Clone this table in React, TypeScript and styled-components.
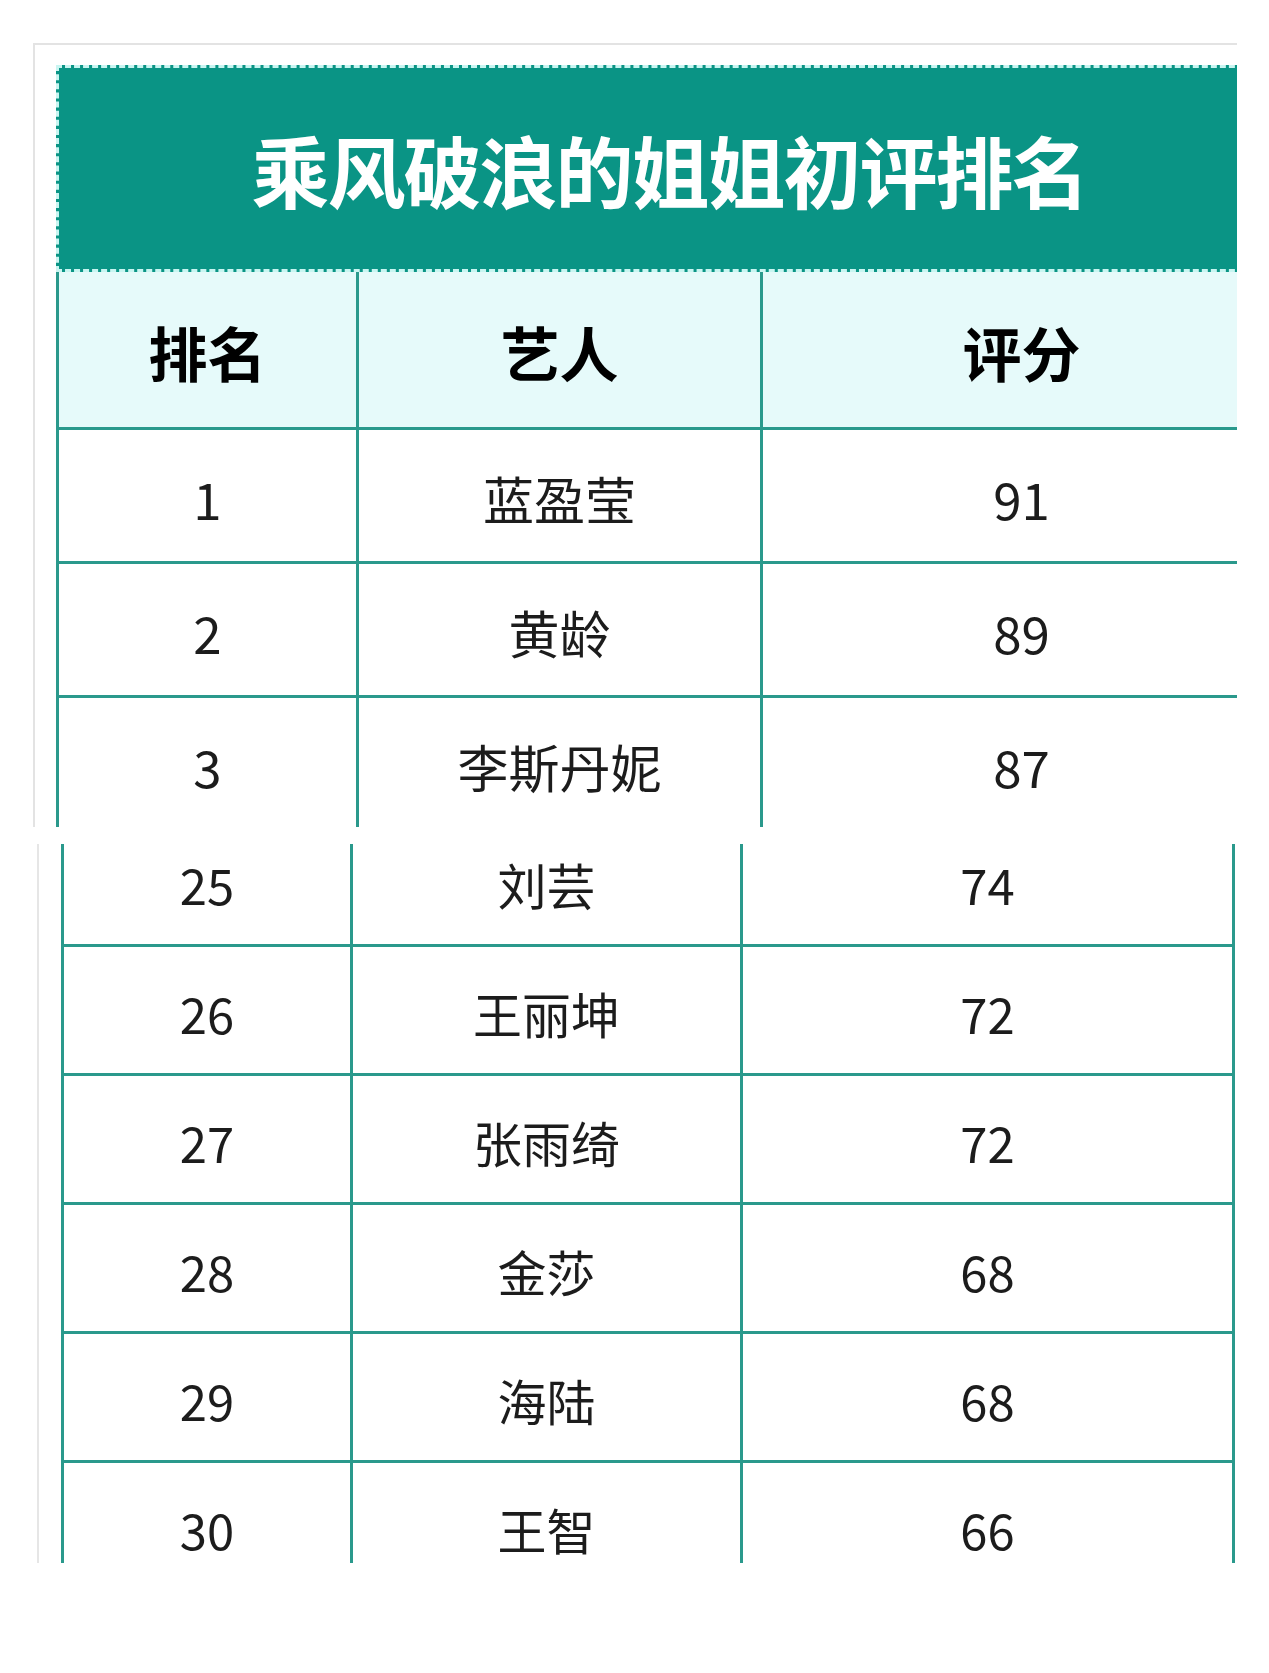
import React from "react";
import styled, { createGlobalStyle } from "styled-components";

type Row = {
  rank: number;
  name: string;
  score: number;
};

const topRows: Row[] = [
  { rank: 1, name: "蓝盈莹", score: 91 },
  { rank: 2, name: "黄龄", score: 89 },
  { rank: 3, name: "李斯丹妮", score: 87 },
];

const bottomRows: Row[] = [
  { rank: 25, name: "刘芸", score: 74 },
  { rank: 26, name: "王丽坤", score: 72 },
  { rank: 27, name: "张雨绮", score: 72 },
  { rank: 28, name: "金莎", score: 68 },
  { rank: 29, name: "海陆", score: 68 },
  { rank: 30, name: "王智", score: 66 },
];

const GlobalStyle = createGlobalStyle`
  html, body {
    margin: 0;
    padding: 0;
    background: #ffffff;
  }
  body {
    font-family: "Noto Sans CJK SC", "Noto Sans", sans-serif;
    color: #1a1a1a;
  }
  * {
    box-sizing: border-box;
  }
`;

const Page = styled.div`
  width: 1269px;
  height: 1673px;
  overflow: hidden;
  padding-top: 43px;
`;

const TopFrame = styled.section`
  width: 1204px;
  height: 784px;
  margin-left: 33px;
  border-top: 2px solid #e3e3e3;
  border-left: 2px solid #e3e3e3;
  padding: 20px 0 0 21px;
  overflow: hidden;
`;

const BottomFrame = styled.section`
  width: 1200px;
  height: 719px;
  margin: 17px 0 0 37px;
  border-left: 2px solid #e6e6e6;
  padding-left: 22px;
  overflow: hidden;
`;

const TitleBar = styled.div`
  width: 1224px;
  height: 207px;
  background: #0a9485;
  border: 3px dashed #c9f5f1;
  border-right: none;
  display: flex;
  align-items: center;
  justify-content: center;
  color: #ffffff;
  font-size: 78px;
  font-weight: 700;
  letter-spacing: -2px;
`;

type GridProps = {
  $cols: string;
  $width: number;
  $shift?: number;
  $closed?: boolean;
};

const Grid = styled.div<GridProps>`
  width: ${({ $width }) => $width}px;
  display: grid;
  grid-template-columns: ${({ $cols }) => $cols};
  border-left: 3px solid #2a998c;
  margin-top: ${({ $shift }) => ($shift ? -$shift : 0)}px;
  ${({ $closed }) => ($closed ? "border-right: 3px solid #2a998c;" : "")}
`;

type CellProps = {
  $height: number;
  $head?: boolean;
  $last?: boolean;
  $size: number;
};

const Cell = styled.div<CellProps>`
  height: ${({ $height }) => $height}px;
  display: flex;
  align-items: center;
  justify-content: center;
  border-bottom: 3px solid #2a998c;
  border-right: ${({ $last }) => ($last ? "none" : "3px solid #2a998c")};
  background: ${({ $head }) => ($head ? "#e6fafa" : "#ffffff")};
  font-size: ${({ $size }) => $size}px;
  font-weight: ${({ $head }) => ($head ? 700 : 400)};
  color: ${({ $head }) => ($head ? "#000000" : "#1c1c1c")};
  padding-top: 4px;
`;

const App: React.FC = () => {
  return (
    <Page>
      <GlobalStyle />
      <TopFrame>
        <TitleBar>乘风破浪的姐姐初评排名</TitleBar>
        <Grid $cols="300px 404px 1fr" $width={1224}>
          <Cell $height={158} $head $size={59}>
            排名
          </Cell>
          <Cell $height={158} $head $size={59}>
            艺人
          </Cell>
          <Cell $height={158} $head $last $size={59}>
            评分
          </Cell>
          {topRows.map((row) => (
            <React.Fragment key={row.rank}>
              <Cell $height={134} $size={51}>
                {row.rank}
              </Cell>
              <Cell $height={134} $size={51}>
                {row.name}
              </Cell>
              <Cell $height={134} $last $size={51}>
                {row.score}
              </Cell>
            </React.Fragment>
          ))}
        </Grid>
      </TopFrame>
      <BottomFrame>
        <Grid $cols="289px 390px 1fr" $width={1174} $shift={26} $closed>
          {bottomRows.map((row) => (
            <React.Fragment key={row.rank}>
              <Cell $height={129} $size={49}>
                {row.rank}
              </Cell>
              <Cell $height={129} $size={49}>
                {row.name}
              </Cell>
              <Cell $height={129} $last $size={49}>
                {row.score}
              </Cell>
            </React.Fragment>
          ))}
        </Grid>
      </BottomFrame>
    </Page>
  );
};

export default App;
